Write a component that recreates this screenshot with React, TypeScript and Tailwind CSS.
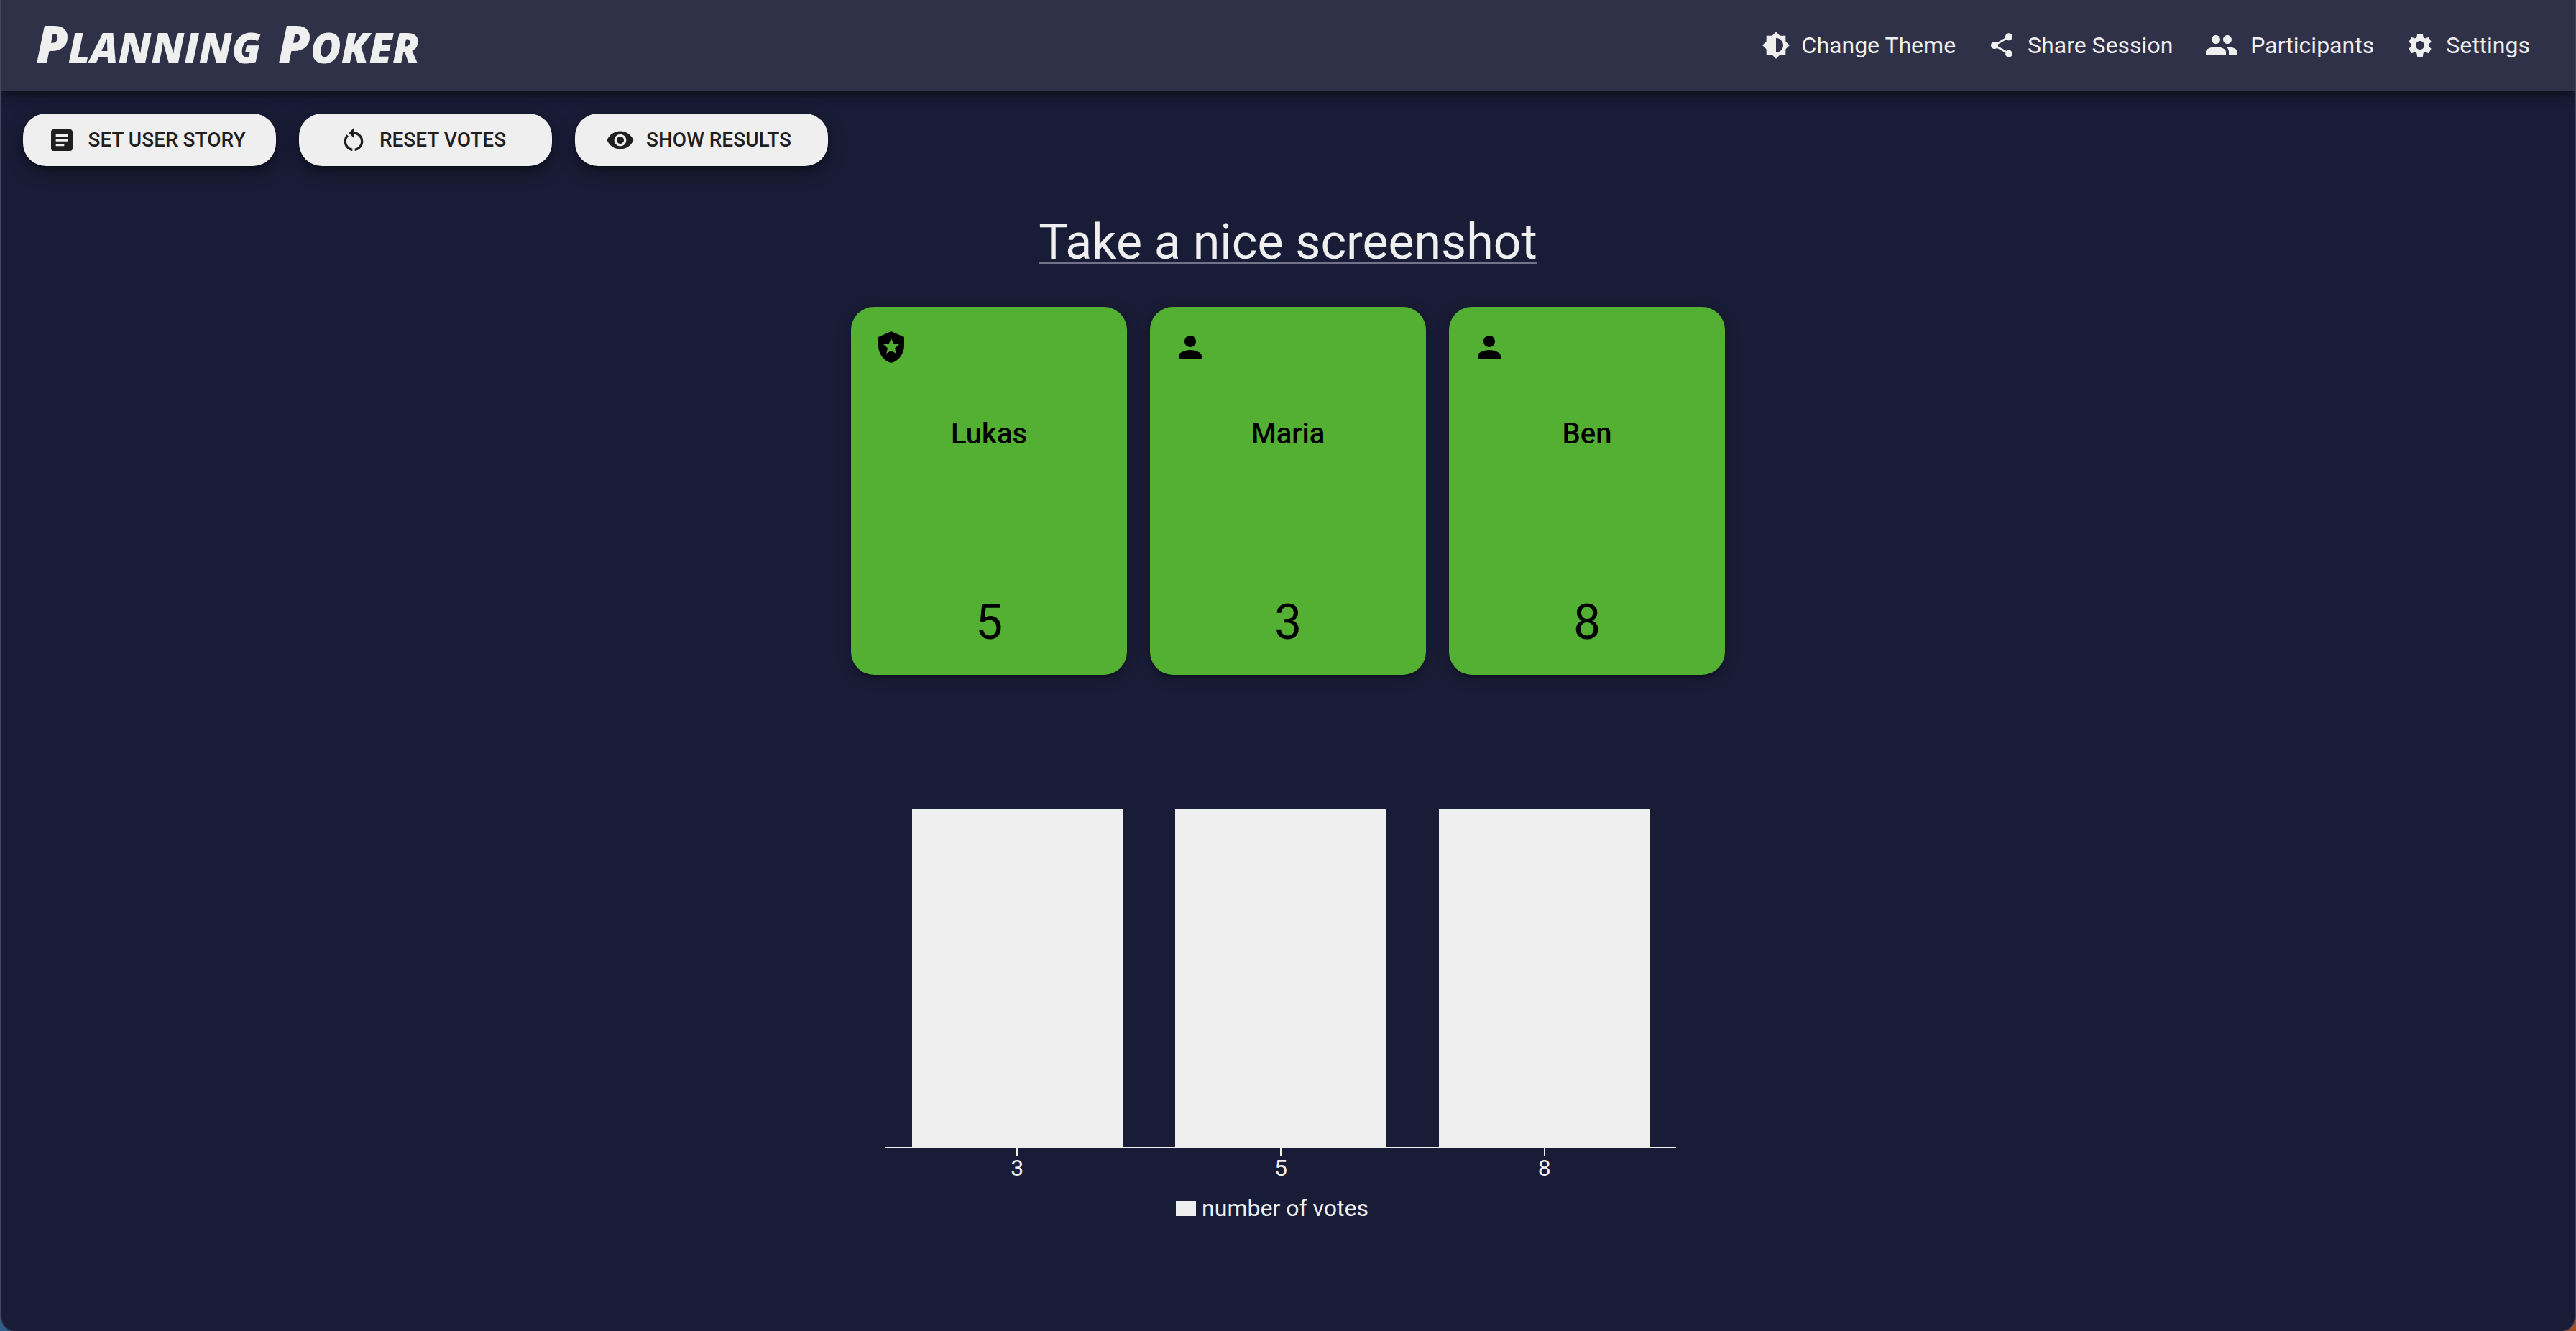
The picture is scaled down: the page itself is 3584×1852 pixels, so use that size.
import type { ReactNode } from 'react';
import {
  MdArticle,
  MdBrightnessMedium,
  MdLocalPolice,
  MdPeople,
  MdPerson,
  MdSettings,
  MdShare,
  MdVisibility,
} from 'react-icons/md';

function RestartIcon() {
  return (
    <svg viewBox="0 0 24 24" fill="currentColor" className="size-10" aria-hidden="true">
      <path d="M12 5V2L8 6l4 4V7c3.31 0 6 2.69 6 6 0 2.97-2.17 5.43-5 5.91v2.02c3.95-.49 7-3.85 7-7.93 0-4.42-3.58-8-8-8zm-6 8c0-1.65.67-3.15 1.76-4.24L6.34 7.34C4.9 8.79 4 10.79 4 13c0 4.08 3.05 7.44 7 7.93v-2.02c-2.83-.48-5-2.94-5-5.91z" />
    </svg>
  );
}

function NavButton({ icon, label }: { icon: ReactNode; label: string }) {
  return (
    <button type="button" className="flex items-center gap-4 text-[32px] leading-12">
      {icon}
      {label}
    </button>
  );
}

function ActionButton({ icon, label }: { icon: ReactNode; label: string }) {
  return (
    <button
      type="button"
      className="flex w-[352px] items-center justify-center gap-4 rounded-[32px] bg-[#efefef] py-3 pr-8 pl-6 text-[28px] leading-[49px] font-medium text-[#1f1f1f] uppercase shadow-[0_6px_2px_-4px_rgba(0,0,0,0.2),0_4px_4px_0_rgba(0,0,0,0.14),0_8px_24px_0_rgba(0,0,0,0.4)]"
    >
      {icon}
      {label}
    </button>
  );
}

const participants = [
  { name: 'Lukas', vote: 5, moderator: true },
  { name: 'Maria', vote: 3, moderator: false },
  { name: 'Ben', vote: 8, moderator: false },
];

const results = [
  { value: 3, votes: 1 },
  { value: 5, votes: 1 },
  { value: 8, votes: 1 },
];

export default function App() {
  const maxVotes = Math.max(...results.map((r) => r.votes));
  return (
    <div className="min-h-screen bg-linear-to-r from-[#2f5f8f] to-[#a0522d] font-['Roboto',sans-serif]">
      <div className="flex min-h-screen flex-col overflow-hidden rounded-b-[20px] border-x-2 border-[#45475c] bg-[#191c36] text-[#efefef]">
        <header className="flex h-[126px] items-center justify-between bg-[#2f3148] pr-[62px] pl-12 shadow-[0_4px_8px_-2px_rgba(0,0,0,0.2),0_8px_10px_0_rgba(0,0,0,0.14),0_2px_20px_0_rgba(0,0,0,0.3)]">
          <h1 className="flex gap-6 font-['Permanent_Marker','Open_Sans',sans-serif] text-[58px] leading-[80px] font-extrabold italic uppercase">
            <span className="block first-letter:text-[72px]">Planning</span>
            <span className="block first-letter:text-[72px]">Poker</span>
          </h1>
          <nav className="flex items-center gap-11">
            <NavButton icon={<MdBrightnessMedium className="size-10" />} label="Change Theme" />
            <NavButton icon={<MdShare className="size-10" />} label="Share Session" />
            <NavButton icon={<MdPeople className="size-12" />} label="Participants" />
            <NavButton icon={<MdSettings className="size-10" />} label="Settings" />
          </nav>
        </header>

        <main className="flex flex-col items-center">
          <div className="flex gap-8 self-stretch px-[30px] pt-8">
            <ActionButton icon={<MdArticle className="size-10" />} label="Set user story" />
            <ActionButton icon={<RestartIcon />} label="Reset votes" />
            <ActionButton icon={<MdVisibility className="size-10" />} label="Show results" />
          </div>

          <h2 className="mt-16 text-[68px] leading-[84px] underline decoration-[#72738a] decoration-[3px] underline-offset-[5px]">
            Take a nice screenshot
          </h2>

          <ul className="mt-12 flex gap-8">
            {participants.map((p) => (
              <li
                key={p.name}
                className="flex h-[512px] w-96 flex-col rounded-[32px] bg-[#54b032] p-8 text-black shadow-[0_4px_2px_-2px_rgba(0,0,0,0.2),0_2px_2px_0_rgba(0,0,0,0.14),0_4px_20px_0_rgba(0,0,0,0.3)]"
              >
                {p.moderator ? <MdLocalPolice className="size-12" /> : <MdPerson className="size-12" />}
                <h3 className="mt-16 text-center text-[40px] leading-[66px] font-medium">{p.name}</h3>
                <p className="mt-auto text-center text-[68px] leading-[82px]">{p.vote}</p>
              </li>
            ))}
          </ul>

          <figure className="mt-[186px] mr-5 flex w-[1100px] flex-col items-center text-[32px]">
            <div className="grid h-[473px] w-full grid-cols-3 items-end border-b-2">
              {results.map((r) => (
                <div
                  key={r.value}
                  className="mx-auto w-4/5 bg-[#efefef]"
                  style={{ height: `${(r.votes / maxVotes) * 100}%` }}
                />
              ))}
            </div>
            <div className="grid w-full grid-cols-3">
              {results.map((r) => (
                <div key={r.value} className="flex flex-col items-center leading-8">
                  <span className="h-[11px] w-0.5 bg-[#efefef]" />
                  {r.value}
                </div>
              ))}
            </div>
            <figcaption className="mt-5 mr-6 flex items-center gap-2 leading-10">
              <span className="h-[21px] w-7 bg-[#efefef]" />
              number of votes
            </figcaption>
          </figure>
        </main>
      </div>
    </div>
  );
}
